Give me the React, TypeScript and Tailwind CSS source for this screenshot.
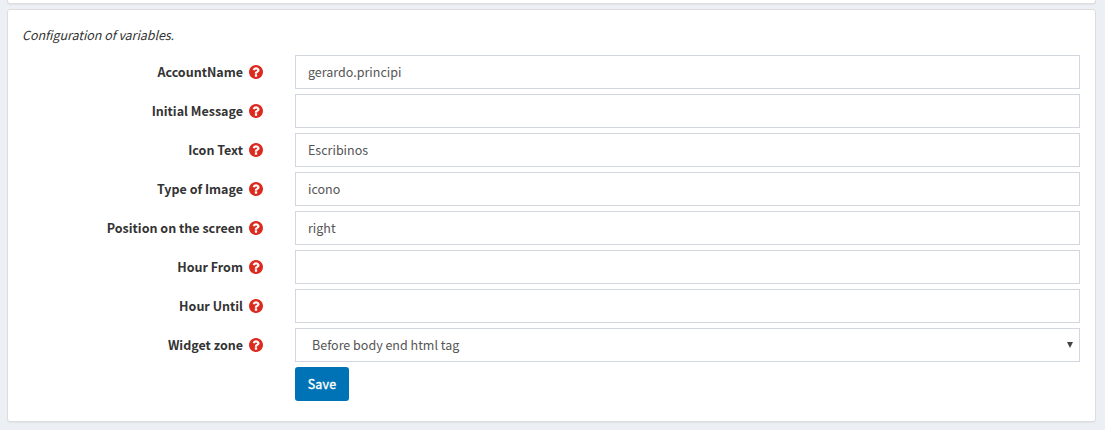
interface Field {
  id: string
  label: string
  value: string
}

const fields: Field[] = [
  { id: 'account', label: 'AccountName', value: 'gerardo.principi' },
  { id: 'message', label: 'Initial Message', value: '' },
  { id: 'icon-text', label: 'Icon Text', value: 'Escribinos' },
  { id: 'image-type', label: 'Type of Image', value: 'icono' },
  { id: 'position', label: 'Position on the screen', value: 'right' },
  { id: 'hour-from', label: 'Hour From', value: '' },
  { id: 'hour-until', label: 'Hour Until', value: '' }
]

function HelpIcon() {
  return (
    <svg viewBox="128 128 1536 1536" className="mr-[0.5px] mt-[0.5px] w-3.5 h-3.5 shrink-0 text-[#dd2a1f]" fill="currentColor">
      <path d="M1024 1376v-192q0-14-9-23t-23-9h-192q-14 0-23 9t-9 23v192q0 14 9 23t23 9h192q14 0 23-9t9-23zm256-672q0-88-55.5-163t-138.5-116-170-41q-243 0-371 213-15 24 8 42l132 100q7 6 19 6 16 0 25-12 53-68 86-92 34-24 86-24 48 0 85.5 26t37.5 59q0 38-20 61t-68 45q-63 28-115.5 86.5t-52.5 125.5v36q0 14 9 23t23 9h192q14 0 23-9t9-23q0-19 21.5-49.5t54.5-49.5q32-18 49-28.5t46-35 44.5-48 28-60.5 12.5-81zm384 192q0 209-103 385.5t-279.5 279.5-385.5 103-385.5-103-279.5-279.5-103-385.5 103-385.5 279.5-279.5 385.5-103 385.5 103 279.5 279.5 103 385.5z" />
    </svg>
  )
}

function FieldLabel({ id, text }: { id: string; text: string }) {
  return (
    <div className="flex w-[240px] shrink-0 items-center justify-end gap-[5.5px]">
      <label htmlFor={id} className="whitespace-nowrap font-bold text-[#333]">{text}</label>
      <HelpIcon />
    </div>
  )
}

export default function App() {
  return (
    <div className="flex h-[430px] flex-col overflow-hidden bg-[#ecf0f5] pl-[7px] pr-[9px] font-['Noto_Sans_CJK_SC',sans-serif] text-[12.5px] leading-5">
      <div className="h-1 shrink-0 rounded-b-[3px] border border-t-0 border-[#ddd] bg-white shadow-[0_1px_1px_rgba(0,0,0,0.05)]" />

      <div className="mt-[5px] h-[413px] shrink-0 rounded-[3px] border border-[#ddd] bg-white px-[15px] pt-[15px] shadow-[0_1px_1px_rgba(0,0,0,0.05)]">
        <p className="-ml-px italic tracking-[-0.05px] text-[#333]">Configuration of variables.</p>

        <form className="mt-[10px] flex flex-col gap-[5px]">
          {fields.map(field => (
            <div key={field.id} className="flex h-[34px] gap-8">
              <FieldLabel id={field.id} text={field.label} />
              <input
                id={field.id}
                defaultValue={field.value}
                className="min-w-0 flex-1 border border-[#d2d6de] bg-white px-3 text-[#555] outline-none"
              />
            </div>
          ))}

          <div className="flex h-[34px] gap-8">
            <FieldLabel id="zone" text="Widget zone" />
            <div className="relative flex flex-1">
              <select id="zone" className="flex-1 appearance-none border border-[#d2d6de] bg-white px-4 text-[#555] outline-none">
                <option>Before body end html tag</option>
              </select>
              <svg viewBox="0 0 6 6" className="pointer-events-none absolute right-[7px] top-[14px] h-1.5 w-1.5" fill="#444">
                <path d="M0 0h6L3 6z" />
              </svg>
            </div>
          </div>

          <button type="button" className="ml-[272px] h-[34px] w-[54px] rounded-[3px] bg-[#0073b7] font-normal tracking-[0.15px] text-white [-webkit-text-stroke:0.35px_white]">
            Save
          </button>
        </form>
      </div>
    </div>
  )
}
